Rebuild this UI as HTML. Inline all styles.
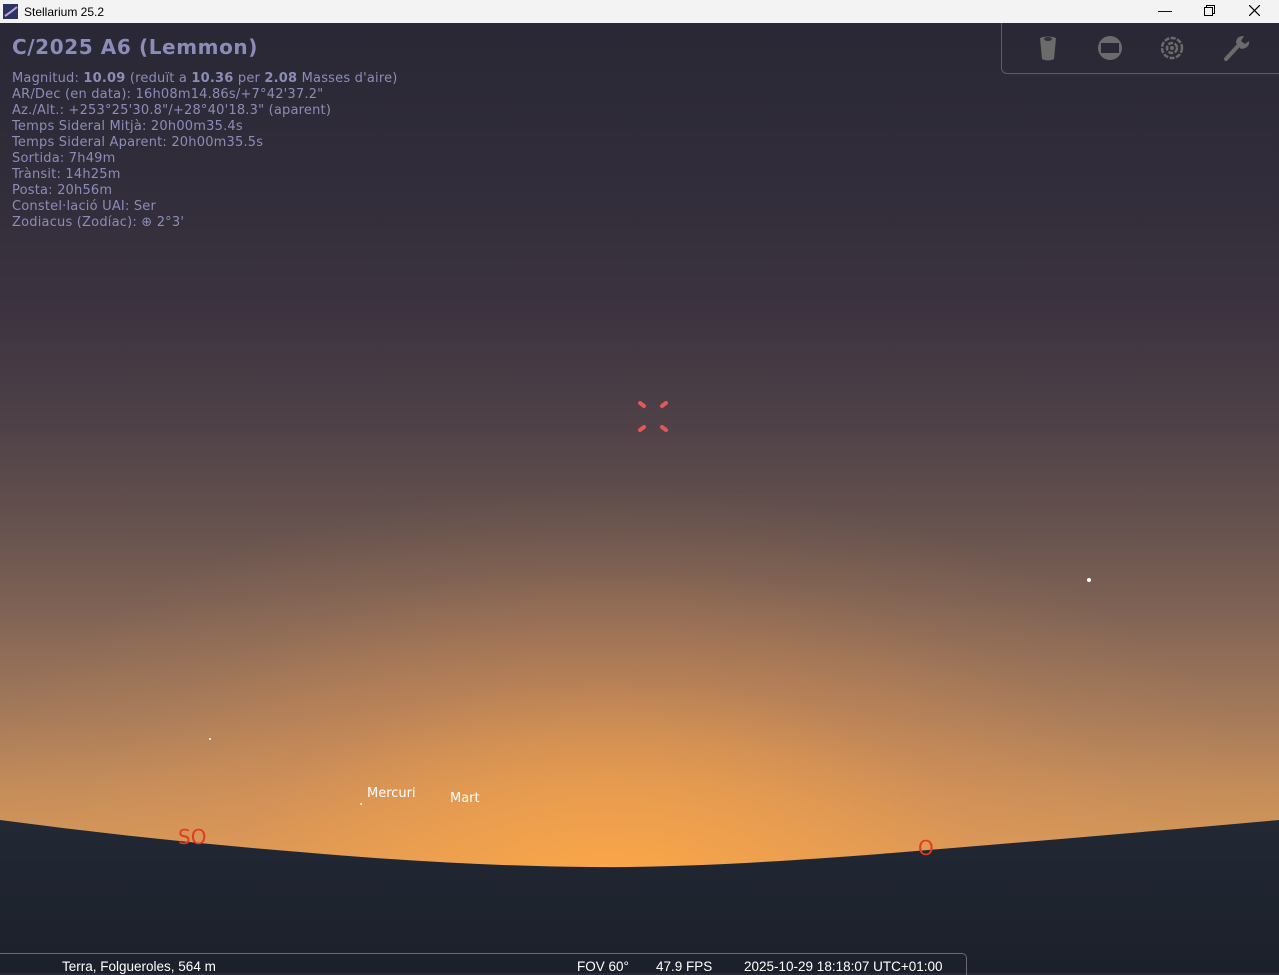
<!DOCTYPE html>
<html><head><meta charset="utf-8"><style>
*{margin:0;padding:0;box-sizing:border-box}
body{width:1279px;height:973px;overflow:hidden;position:relative;font-family:"Liberation Sans","DejaVu Sans",sans-serif;background:#2b2937}
#title{position:absolute;left:0;top:0;width:1279px;height:23px;background:#f3f3f3;font-size:12px;color:#000}
#title .t{position:absolute;left:24px;top:5px}
#sky{position:absolute;left:0;top:23px;width:1279px;height:950px;
background:radial-gradient(ellipse 700px 420px at 610px 880px,rgba(255,168,70,1) 0%,rgba(245,162,75,0.75) 25%,rgba(230,150,85,0.35) 55%,rgba(220,150,90,0.1) 80%,rgba(220,150,90,0) 100%),
linear-gradient(to bottom,#2a2836 0%,#302c39 15%,#3c3340 30%,#4e4147 42%,#66524e 53%,#836556 63%,#a57a5a 73%,#c58d5a 81%,#d99a58 88%,#e0a055 95%)}
.info{position:absolute;left:12px;color:#8c8cb8;font-family:"DejaVu Sans",sans-serif;font-size:13px;line-height:16px;letter-spacing:0.2px}
.info b{font-weight:bold}
h1{position:absolute;left:12px;top:35px;font-family:"DejaVu Sans",sans-serif;font-size:20px;font-weight:bold;color:#8c8cb8;letter-spacing:0.6px}
#tb{position:absolute;left:1001px;top:23px;width:290px;height:51px;border:1px solid #5c5c66;border-top:none;border-radius:0 0 0 6px}
.lbl{position:absolute;color:#fff;font-family:"DejaVu Sans",sans-serif;font-size:13px}
.card{position:absolute;color:#e03c20;font-family:"DejaVu Sans",sans-serif;font-size:20px}
#bar{position:absolute;left:0;top:953px;width:967px;height:22px;border-top:1px solid #6a6a72;border-right:1px solid #6a6a72;border-radius:0 5px 0 0;color:#fff;font-size:13.5px}
#bar span{position:absolute;top:5px}
.star{position:absolute;background:#fff;border-radius:50%}
</style></head><body>
<div id="sky"></div>
<div id="title"><svg style="position:absolute;left:3px;top:4px" width="15" height="15"><rect width="15" height="15" fill="#2a3660"/><path d="M2 12 Q8 8 14 3" stroke="#c8a0e0" stroke-width="2" fill="none"/></svg><span class="t">Stellarium 25.2</span>
<span style="position:absolute;left:1158px;top:2px;font-size:14px">—</span>
<svg style="position:absolute;left:1204px;top:5px" width="11" height="11"><rect x="0.5" y="2.5" width="8" height="8" fill="none" stroke="#000"/><path d="M2.5 2.5V0.5H10.5V8.5H8.5" fill="none" stroke="#000"/></svg>
<svg style="position:absolute;left:1249px;top:5px" width="11" height="11"><path d="M0 0L11 11M11 0L0 11" stroke="#000" stroke-width="1.2"/></svg></div>
<h1>C/2025 A6 (Lemmon)</h1>
<div class="info" style="top:71px">Magnitud: <b>10.09</b> (reduït a <b>10.36</b> per <b>2.08</b> Masses d'aire)<br>AR/Dec (en data): 16h08m14.86s/+7°42'37.2"<br>Az./Alt.: +253°25'30.8"/+28°40'18.3" (aparent)<br>Temps Sideral Mitjà: 20h00m35.4s<br>Temps Sideral Aparent: 20h00m35.5s<br>Sortida: 7h49m<br>Trànsit: 14h25m<br>Posta: 20h56m<br>Constel·lació UAI: Ser<br>Zodiacus (Zodíac): ⊕ 2°3'</div>
<div id="tb"></div>
<svg style="position:absolute;left:1030px;top:33px" width="230" height="30">
<path d="M10 5 Q18 2 26 5 L24 26 Q18 29 12 26 Z" fill="#6b6b6b"/><ellipse cx="18" cy="6" rx="4" ry="2" fill="#333"/>
<circle cx="80" cy="15" r="12" fill="#6b6b6b"/><rect x="71" y="10" width="18" height="10" fill="#2b2937"/>
<g fill="none" stroke="#6b6b6b" stroke-width="2.5" stroke-dasharray="5 1.5"><circle cx="142" cy="15" r="10"/><circle cx="142" cy="15" r="5"/></g><circle cx="142" cy="15" r="2" fill="#6b6b6b"/>
<path d="M196 26 L208 13" stroke="#6b6b6b" stroke-width="4" stroke-linecap="round"/><path d="M206 10 Q206 3 214 3 L211 8 L215 11 L219 8 Q220 15 211 16Z" fill="#6b6b6b"/>
</svg>
<svg style="position:absolute;left:630px;top:392px" width="50" height="50"><g stroke="#ff5a60" stroke-width="4" stroke-linecap="round" opacity=".85"><path d="M10 11L14 14M36 11L32 14M10 38L14 35M36 38L32 35"/></g></svg>
<div class="star" style="left:1087px;top:578px;width:4px;height:4px"></div>
<div class="star" style="left:209px;top:738px;width:2px;height:2px"></div>
<div class="star" style="left:360px;top:803px;width:2px;height:2px"></div>
<div class="lbl" style="left:367px;top:786px">Mercuri</div>
<div class="lbl" style="left:450px;top:791px">Mart</div>
<svg style="position:absolute;left:0;top:0" width="1279" height="973"><defs><linearGradient id="g" x1="0" y1="0" x2="0" y2="1"><stop offset="0" stop-color="#222834"/><stop offset="1" stop-color="#1b202a"/></linearGradient></defs>
<path d="M0 820 Q150 840 300 852 Q460 866 590 867 Q700 868 880 854 Q1100 836 1279 820 V973 H0Z" fill="url(#g)"/></svg>
<div class="card" style="left:178px;top:825px">SO</div>
<div class="card" style="left:918px;top:836px">O</div>
<div id="bar"><span style="left:62px">Terra, Folgueroles, 564 m</span><span style="left:577px">FOV 60°</span><span style="left:656px">47.9 FPS</span><span style="left:744px">2025-10-29 18:18:07 UTC+01:00</span></div>
</body></html>
